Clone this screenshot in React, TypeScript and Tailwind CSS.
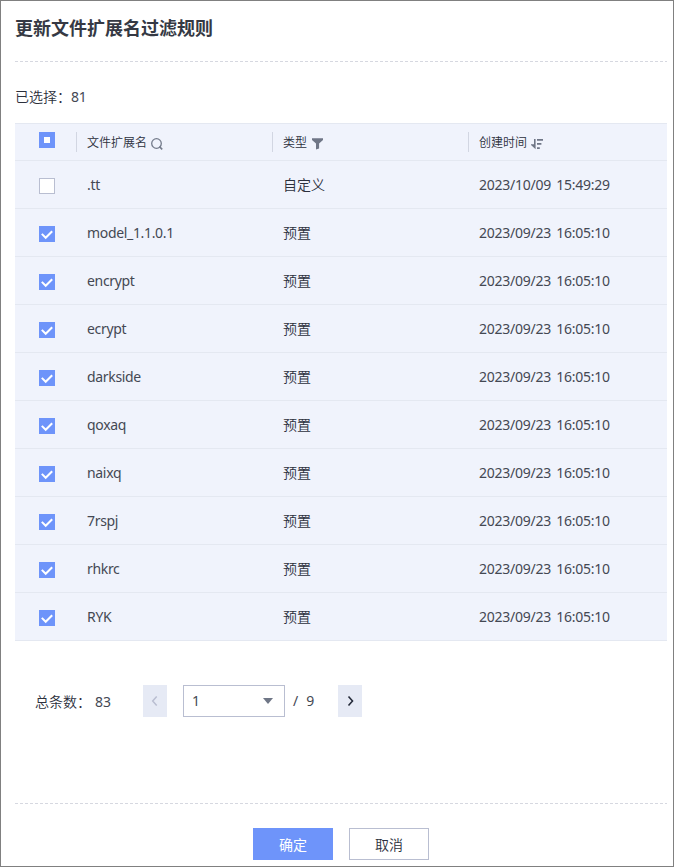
import React from "react";

const rows: [string, string, string, boolean][] = [
  [".tt", "自定义", "2023/10/09 15:49:29", false],
  ["model_1.1.0.1", "预置", "2023/09/23 16:05:10", true],
  ["encrypt", "预置", "2023/09/23 16:05:10", true],
  ["ecrypt", "预置", "2023/09/23 16:05:10", true],
  ["darkside", "预置", "2023/09/23 16:05:10", true],
  ["qoxaq", "预置", "2023/09/23 16:05:10", true],
  ["naixq", "预置", "2023/09/23 16:05:10", true],
  ["7rspj", "预置", "2023/09/23 16:05:10", true],
  ["rhkrc", "预置", "2023/09/23 16:05:10", true],
  ["RYK", "预置", "2023/09/23 16:05:10", true],
];

function DashedLine() {
  return (
    <div className="h-px w-[652px] bg-[repeating-linear-gradient(90deg,#d6d8e0_0px,#d6d8e0_3px,transparent_3px,transparent_5px)]" />
  );
}

function Checkbox({ checked }: { checked: boolean }) {
  if (!checked) return <span className="block size-4 border border-[#b9bed1] bg-white" />;
  return (
    <span className="block size-4 bg-[#6e94fa]">
      <svg width="16" height="16" viewBox="0 0 16 16" fill="none">
        <path d="M2.8 7.9 6.7 11.8 13.2 5.3" stroke="#fff" strokeWidth="2" />
      </svg>
    </span>
  );
}

function SearchIcon() {
  return (
    <svg width="12" height="12" viewBox="0 0 12 12" fill="none" stroke="#747b8b">
      <circle cx="5.5" cy="5.5" r="4.8" strokeWidth="1.3" />
      <path d="M8.4 8.6 11.2 11.4" strokeWidth="1.6" />
    </svg>
  );
}

function FilterIcon() {
  return (
    <svg width="11" height="12" viewBox="0 0 11 12" fill="#6f7686">
      <path d="M0 0.3H11V2L7.1 5.6V10.4L4 11.4V5.6L0 2Z" />
    </svg>
  );
}

function SortIcon() {
  return (
    <svg width="12" height="11" viewBox="0 0 12 11" fill="#6f7686">
      <path d="M3 0H4.6V10.2L0 6V5.3H3Z" />
      <path d="M6 0H12V1.8H6ZM6 4H10.4V5.8H6ZM6 8.2H8.8V10H6Z" />
    </svg>
  );
}

export default function App() {
  return (
    <div className="flex h-[867px] w-[674px] flex-col border border-[#808080] bg-white pl-3.5 font-['Noto_Sans','Noto_Sans_CJK_SC',sans-serif] text-sm font-[350] text-[#444853]">
      <h1 className="h-[60px] pt-[14px] text-[18px] leading-[26px] font-bold text-[#353944]">更新文件扩展名过滤规则</h1>
      <DashedLine />
      <div className="h-[61px] pt-[25px] leading-5 text-[#2c303c]">
        已选择：<span className="font-normal tracking-[-0.3px] text-[#444853]">81</span>
      </div>

      <div className="w-[652px] border-t border-[#e4e8f1] bg-[#f0f3fc]">
        <div className="grid h-[37px] grid-cols-[61px_196px_196px_1fr] border-b border-[#e4e8f1] text-xs leading-[22px] text-[#2c303c]">
          <div className="pt-2 pl-6">
            <span className="flex size-4 items-center justify-center bg-[#6e94fa]">
              <span className="size-1.5 bg-white" />
            </span>
          </div>
          <div className="mt-2 flex h-5 border-l border-[#d2d6e2] pl-2.5">
            文件扩展名<span className="mt-1.5 ml-1"><SearchIcon /></span>
          </div>
          <div className="mt-2 flex h-5 border-l border-[#d2d6e2] pl-2.5">
            类型<span className="mt-1.5 ml-[5px]"><FilterIcon /></span>
          </div>
          <div className="mt-2 flex h-5 border-l border-[#d2d6e2] pl-2.5">
            创建时间<span className="mt-[7px] ml-1"><SortIcon /></span>
          </div>
        </div>
        {rows.map(([name, type, time, checked]) => (
          <div key={name} className="grid h-12 grid-cols-[72px_196px_196px_1fr] border-b border-[#e4e8f1] leading-[47px]">
            <div className="pt-[17px] pl-6"><Checkbox checked={checked} /></div>
            <div className="font-normal tracking-[-0.33px]">{name}</div>
            <div className="text-[#2c303c]">{type}</div>
            <div className="font-normal tracking-[-0.26px] [word-spacing:2px]">{time}</div>
          </div>
        ))}
      </div>

      <div className="mt-11 flex h-8 pl-5 leading-[34px]">
        <span className="w-[60px] text-[#2c303c]">总条数：</span>
        <span className="w-12 font-normal">83</span>
        <button className="flex h-8 w-6 items-center justify-center bg-[#e6eaf5]">
          <svg width="8" height="12" viewBox="0 0 8 12" fill="none"><path d="M5.7 1.5 1.7 6 5.7 10.5" stroke="#b9bed1" strokeWidth="1.5" /></svg>
        </button>
        <div className="ml-4 flex h-8 w-[102px] items-center justify-between border border-[#b9bed1] pr-[11px] pl-2">
          <span className="font-normal">1</span>
          <svg width="10" height="6" viewBox="0 0 10 6" fill="#6f7686"><path d="M0 0H10L5 6Z" /></svg>
        </div>
        <span className="w-[53px] pl-2 leading-8 font-normal">/<span className="ml-2">9</span></span>
        <button className="flex h-8 w-6 items-center justify-center bg-[#e6eaf5]">
          <svg width="8" height="12" viewBox="0 0 8 12" fill="none"><path d="M2.5 1.5 6.5 6 2.5 10.5" stroke="#252b3a" strokeWidth="1.6" /></svg>
        </button>
      </div>

      <div className="mt-[86px]"><DashedLine /></div>
      <div className="mt-6 flex gap-4 pl-[238px] leading-[34px]">
        <button className="h-8 w-20 bg-[#6e94fa] font-normal text-white">确定</button>
        <button className="h-8 w-20 border border-[#b9bed1] leading-8 text-[#2c303c]">取消</button>
      </div>
    </div>
  );
}
